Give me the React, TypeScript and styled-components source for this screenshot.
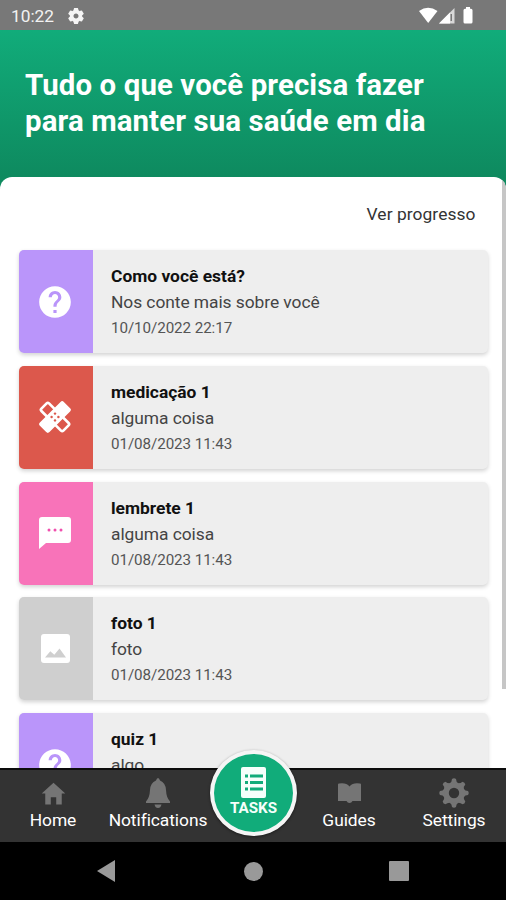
import React from 'react';
import styled, { createGlobalStyle } from 'styled-components';
import { MdHelp } from 'react-icons/md';
import { IoMdHome } from 'react-icons/io';

const GlobalStyle = createGlobalStyle`
  * { box-sizing: border-box; }
  body { margin: 0; font-family: Roboto, "Liberation Sans", sans-serif; }
  svg { display: block; }
`;

const Screen = styled.div`
  width: 506px;
  height: 900px;
  display: flex;
  flex-direction: column;
  overflow: hidden;
  background: #000;
`;

const StatusBar = styled.div`
  height: 30px;
  flex: none;
  display: flex;
  align-items: center;
  padding: 2px 31px 0 11px;
  background: #787878;
  color: #f2f2f2;
  font-size: 17.3px;
`;

const Clock = styled.span`
  width: 57px;
`;

const StatusIcons = styled.div`
  display: flex;
  align-items: center;
  margin-left: auto;
`;

const Header = styled.header`
  height: 158px;
  flex: none;
  padding: 37.5px 25px 0;
  background: linear-gradient(#11ac7a 0, #0e8a5f 147px);
`;

const Title = styled.h1`
  margin: 0;
  color: #fff;
  font-size: 29.4px;
  line-height: 35.6px;
  font-weight: 700;
  letter-spacing: 0.11px;
  white-space: nowrap;
`;

const TitleLine = styled.span`
  display: block;
  padding-top: 0.5px;
`;

const Panel = styled.main`
  position: relative;
  flex: 1;
  min-height: 0;
  margin-top: -11px;
  overflow: hidden;
  background: #fff;
  border-radius: 12px 12px 0 0;
`;

const Progress = styled.div`
  height: 73.3px;
  padding: 27px 30.5px 0 0;
  text-align: right;
  font-size: 17.4px;
  line-height: 21px;
  letter-spacing: 0.06px;
  color: #333;
`;

const ScrollThumb = styled.div`
  position: absolute;
  top: 0;
  right: 0;
  width: 4px;
  height: 512px;
  background: #c6c6c6;
`;

const CardList = styled.div`
  display: flex;
  flex-direction: column;
  gap: 12.7px;
  padding: 0 18px 0 19px;
`;

const Card = styled.article`
  height: 103px;
  flex: none;
  display: flex;
  overflow: hidden;
  border-radius: 5px;
  background: #eee;
  box-shadow: 0 2px 4px rgba(0, 0, 0, 0.18);
`;

const CardIcon = styled.div<{ $color: string }>`
  width: 73.5px;
  flex: none;
  display: flex;
  align-items: center;
  justify-content: center;
  padding-right: 0.9px;
  background: ${(p) => p.$color};
  color: #fff;
`;

const CardBody = styled.div`
  padding: 13px 0 0 18.5px;
  white-space: nowrap;
`;

const CardTitle = styled.div`
  font-size: 17.4px;
  line-height: 26px;
  font-weight: 700;
  color: #111;
`;

const CardText = styled.div`
  font-size: 17.4px;
  line-height: 27px;
  letter-spacing: -0.06px;
  color: #444;
`;

const CardDate = styled.div`
  font-size: 15.2px;
  line-height: 25px;
  letter-spacing: -0.08px;
  color: #555;
`;

const TabBar = styled.nav`
  height: 74px;
  flex: none;
  display: grid;
  grid-template-columns: 106px 104px 86px 106px 104px;
  border-top: 2px solid #0c0c0c;
  background: #333;
`;

const Tab = styled.div`
  display: flex;
  flex-direction: column;
  align-items: center;
  color: #fff;
  font-size: 17.4px;
  line-height: 22px;
  letter-spacing: -0.06px;
`;

const TabIcon = styled.div`
  height: 39px;
  padding-top: 7px;
  display: flex;
  align-items: center;
  color: #757575;
`;

const TabCenter = styled.div`
  position: relative;
`;

const TasksButton = styled.div`
  position: absolute;
  top: -20px;
  left: 0;
  width: 87px;
  height: 86px;
  display: flex;
  flex-direction: column;
  align-items: center;
  padding-top: 13px;
  border: 4px solid #f5f5f5;
  border-radius: 50%;
  background: #11ac7a;
  box-shadow: 0 1px 3px rgba(0, 0, 0, 0.45);
  color: #f5fffb;
  font-size: 15.2px;
  line-height: 20px;
  font-weight: 700;
`;

const SystemBar = styled.div`
  height: 58px;
  flex: none;
  display: grid;
  grid-template-columns: 180px 147px 179px;
  align-items: center;
  background: #000;
  color: #999;
`;

const SystemKey = styled.div<{ $left: number }>`
  padding-left: ${(p) => p.$left}px;
`;

const StatusGear = () => (
  <svg width="16" height="16" viewBox="-8 -8 16 16">
    <circle r="4.3" fill="none" stroke="#f5f5f5" strokeWidth="3.6" />
    {[0, 60, 120, 180, 240, 300].map((a) => (
      <path key={a} fill="#f5f5f5" transform={`rotate(${a})`} d="M-2.8-5L-1.9-7.9h3.8L2.8-5z" />
    ))}
  </svg>
);

const BandagesIcon = () => (
  <svg width="32" height="32" viewBox="-17 -17 34 34">
    <rect x="-16.5" y="-5.7" width="33" height="11.4" rx="1.8" transform="rotate(45)" fill="none" stroke="#fff" strokeWidth="2.8" />
    <rect x="-18" y="-7.2" width="36" height="14.4" rx="2.5" transform="rotate(-45)" fill="#fff" />
    <g fill="#dc584c">
      <circle cx="-3.6" r="1.3" />
      <circle cx="3.6" r="1.3" />
      <circle cy="-3.6" r="1.3" />
      <circle cy="3.6" r="1.3" />
    </g>
  </svg>
);

const ChatIcon = () => (
  <svg width="32" height="32" viewBox="0 0 32 32">
    <path fill="#fff" d="M3 0h26q3 0 3 3v20q0 3-3 3H7L0 32V3q0-3 3-3z" />
    <g fill="#f04fae">
      <circle cx="10" cy="13" r="1.5" />
      <circle cx="16" cy="13" r="1.5" />
      <circle cx="22" cy="13" r="1.5" />
    </g>
  </svg>
);

const PhotoIcon = () => (
  <svg width="29" height="29" viewBox="0 0 29 29">
    <rect width="29" height="29" rx="3" fill="#fff" />
    <path fill="#cfcfcf" d="M4 23.5l5.3-6.3 4 3.5 5.2-6.2 6.5 9z" />
  </svg>
);

const ListIcon = () => (
  <svg width="25" height="31" viewBox="0 0 25 31">
    <rect width="25" height="31" rx="2" fill="#f5fffb" />
    <path
      fill="#11ac7a"
      d="M4 7.5h3v3H4zm5 0h13v3H9zM4 14h3v3H4zm5 0h13v3H9zM4 20.5h3v3H4zm5 0h13v3H9z"
    />
  </svg>
);

const BellIcon = () => (
  <svg width="24" height="30" viewBox="0 0 24 30">
    <path
      fill="currentColor"
      d="M12 0Q13.3 0 14 2.6Q19.6 5 20 12q.3 7.5 4 11.500V25H0v-1.5q3.7-4 4-11.500Q4.4 5 10 2.6 10.7 0 12 0zM8.5 26.5h7Q14.7 30 12 30t-3.5-3.5z"
    />
  </svg>
);

const BookIcon = () => (
  <svg width="23" height="20" viewBox="0 0 23 20">
    <path
      fill="currentColor"
      d="M1 .5Q8-.8 11.500 3.500 15-.8 22 .5q1 0 1 1V18h-8.500q-1 2-3 2t-3-2H0V1.500q0-1 1-1z"
    />
  </svg>
);

const teeth = [0, 45, 90, 135, 180, 225, 270, 315];

const GearIcon = () => (
  <svg width="30" height="30" viewBox="-15 -15 30 30">
    <circle r="8" fill="none" stroke="currentColor" strokeWidth="5.6" />
    {teeth.map((a) => (
      <path
        key={a}
        fill="currentColor"
        transform={`rotate(${a})`}
        d="M-4-9.8Q-2.2-11-2-14Q0-15.4 2-14Q2.2-11 4-9.8z"
      />
    ))}
  </svg>
);

const SignalIcons = () => (
  <svg width="56" height="18" viewBox="0 0 56 18">
    <path fill="#fff" d="M0 4Q9-2.5 18.5 4L9.2 16z" />
    <path fill="#d8d8d8" d="M20 16.5L35.5 1v15.5z" />
    <path fill="#fff" d="M20 16.5L31 5.5v11z" />
    <path fill="#787878" d="M31.5 7h1.5v7h-1.5z" />
    <path fill="#fff" d="M47 0h4v1.7h1q1.5 0 1.5 1.5V15q0 1.5-1.5 1.5h-6q-1.5 0-1.5-1.5V3.2q0-1.5 1.5-1.5h1z" />
  </svg>
);

const cards = [
  { title: 'Como você está?', text: 'Nos conte mais sobre você', date: '10/10/2022 22:17', color: '#ba95fa', icon: <MdHelp size={38} /> },
  { title: 'medicação 1', text: 'alguma coisa', date: '01/08/2023 11:43', color: '#dc584c', icon: <BandagesIcon /> },
  { title: 'lembrete 1', text: 'alguma coisa', date: '01/08/2023 11:43', color: '#f873b9', icon: <ChatIcon /> },
  { title: 'foto 1', text: 'foto', date: '01/08/2023 11:43', color: '#cfcfcf', icon: <PhotoIcon /> },
  { title: 'quiz 1', text: 'algo', date: '01/08/2023 11:43', color: '#ba95fa', icon: <MdHelp size={38} /> },
];

export default function App() {
  return (
    <Screen>
      <GlobalStyle />
      <StatusBar>
        <Clock>10:22</Clock>
        <StatusGear />
        <StatusIcons>
          <SignalIcons />
        </StatusIcons>
      </StatusBar>
      <Header>
        <Title>
          <TitleLine>Tudo o que você precisa fazer</TitleLine>
          <TitleLine>para manter sua saúde em dia</TitleLine>
        </Title>
      </Header>
      <Panel>
        <Progress>Ver progresso</Progress>
        <CardList>
          {cards.map((c) => (
            <Card key={c.title}>
              <CardIcon $color={c.color}>{c.icon}</CardIcon>
              <CardBody>
                <CardTitle>{c.title}</CardTitle>
                <CardText>{c.text}</CardText>
                <CardDate>{c.date}</CardDate>
              </CardBody>
            </Card>
          ))}
        </CardList>
        <ScrollThumb />
      </Panel>
      <TabBar>
        <Tab>
          <TabIcon><IoMdHome size={29} /></TabIcon>
          Home
        </Tab>
        <Tab>
          <TabIcon><BellIcon /></TabIcon>
          Notifications
        </Tab>
        <TabCenter>
          <TasksButton>
            <ListIcon />
            TASKS
          </TasksButton>
        </TabCenter>
        <Tab>
          <TabIcon><BookIcon /></TabIcon>
          Guides
        </Tab>
        <Tab>
          <TabIcon><GearIcon /></TabIcon>
          Settings
        </Tab>
      </TabBar>
      <SystemBar>
        <SystemKey $left={97}>
          <svg width="18" height="22" viewBox="0 0 18 22"><path fill="currentColor" d="M18 0v22L0 11z" /></svg>
        </SystemKey>
        <SystemKey $left={64}>
          <svg width="19" height="19" viewBox="0 0 19 19"><circle cx="9.5" cy="9.5" r="9.5" fill="currentColor" /></svg>
        </SystemKey>
        <SystemKey $left={62}>
          <svg width="20" height="20" viewBox="0 0 20 20"><rect width="20" height="20" rx="1" fill="currentColor" /></svg>
        </SystemKey>
      </SystemBar>
    </Screen>
  );
}
